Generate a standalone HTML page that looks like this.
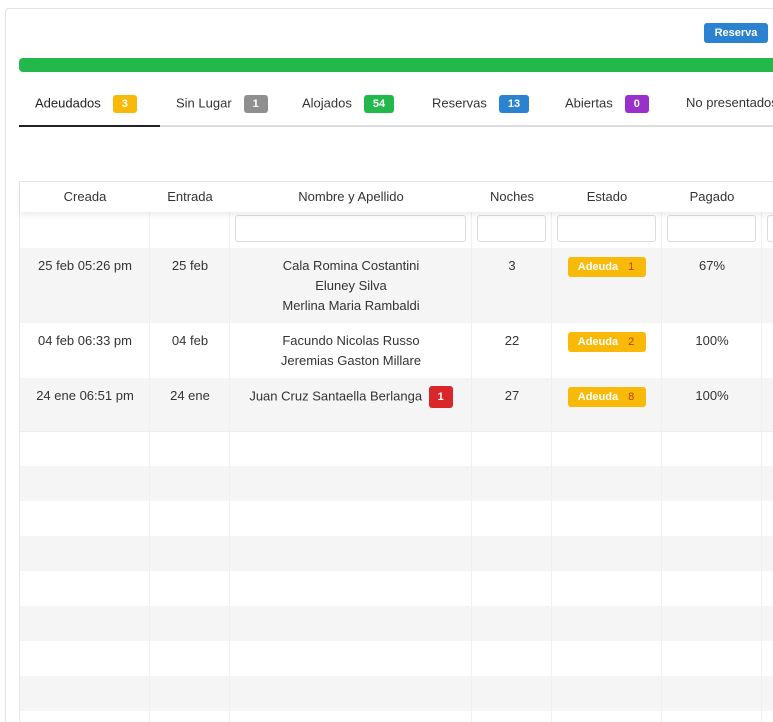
<!DOCTYPE html>
<html><head><style>
*{box-sizing:border-box;margin:0;padding:0}
html,body{width:773px;height:722px;overflow:hidden}
body{background:#fff;font-family:"Liberation Sans",sans-serif;color:#333;position:relative;font-size:13px}
.card{position:absolute;left:5px;top:8px;width:800px;height:730px;border:1px solid #e2e2e2;border-radius:4px}
.abs{position:absolute}
.btn{left:704px;top:23px;width:64px;height:20px;background:#2a82d1;color:#fff;font-size:11px;font-weight:bold;text-align:center;line-height:20px;border-radius:3px}
.bar{left:19px;top:58px;width:800px;height:14px;background:#22b84a;border-radius:4px}
.tab{position:absolute;top:95px;font-size:13px;color:#333;white-space:nowrap}
.b{display:inline-block;color:#fff;font-size:11px;font-weight:bold;padding:0 9px;height:18px;line-height:18px;border-radius:3px;margin-left:12px;vertical-align:middle}
.tabline{left:19px;top:125px;width:760px;height:2px;background:#ddd}
.tabact{left:19px;top:125px;width:141px;height:2px;background:#222}
.tbl{left:19px;top:181px;width:760px;height:560px;border-top:1px solid #e6e6e6;border-left:1px solid #e6e6e6}
.row{position:absolute;left:0;width:760px}
.g{background:#f5f5f5}
.vl{position:absolute;top:0;bottom:0;width:1px;background:#f0f0f0}
.c{position:absolute;text-align:center;line-height:20px;font-size:13px}
.inp{position:absolute;top:33px;height:27px;background:#fff;border:1px solid #dcdcdc;border-radius:3px}
.est{display:inline-block;background:#f9b908;color:#fff;font-size:11px;font-weight:bold;height:20px;line-height:20px;padding:0 12px 0 10px;border-radius:3px}
.est span{color:#b3420a;font-weight:normal;margin-left:10px}
</style></head><body>
<div class="card"></div>
<div class="abs btn">Reserva</div>
<div class="abs bar"></div>
<div class="tab" style="left:35px;color:#222">Adeudados<span class="b" style="background:#f9b908">3</span></div>
<div class="tab" style="left:176px">Sin Lugar<span class="b" style="background:#8f8f8f">1</span></div>
<div class="tab" style="left:302px">Alojados<span class="b" style="background:#22b84a">54</span></div>
<div class="tab" style="left:432px">Reservas<span class="b" style="background:#2a82d1">13</span></div>
<div class="tab" style="left:565px">Abiertas<span class="b" style="background:#9b2fc9">0</span></div>
<div class="tab" style="left:686px">No presentados</div>
<div class="abs tabline"></div><div class="abs tabact"></div>
<div class="abs tbl">
<div class="row" style="top:0;height:30px;background:#fff;box-shadow:0 3px 6px rgba(0,0,0,.08);z-index:2"></div>
<div class="row" style="top:30px;height:36px;background:#fff"></div>
<div class="row g" style="top:66px;height:75px"></div>
<div class="row" style="top:141px;height:55px"></div>
<div class="row g" style="top:196px;height:53px"></div>
<div class="row" style="top:249px;height:35px"></div>
<div class="row g" style="top:284px;height:35px"></div>
<div class="row" style="top:319px;height:35px"></div>
<div class="row g" style="top:354px;height:35px"></div>
<div class="row" style="top:389px;height:35px"></div>
<div class="row g" style="top:424px;height:35px"></div>
<div class="row" style="top:459px;height:35px"></div>
<div class="row g" style="top:494px;height:35px"></div>
<div class="row" style="top:529px;height:35px"></div>
<div class="row" style="top:249px;height:1px;background:#eee"></div>
<div class="vl" style="left:129px"></div><div class="vl" style="left:209px"></div><div class="vl" style="left:451px"></div><div class="vl" style="left:531px"></div><div class="vl" style="left:641px"></div><div class="vl" style="left:741px"></div>
<div style="position:absolute;left:0;top:0;width:760px;z-index:3">
<div class="c" style="left:0;width:130px;top:5px">Creada</div>
<div class="c" style="left:130px;width:80px;top:5px">Entrada</div>
<div class="c" style="left:210px;width:242px;top:5px">Nombre y Apellido</div>
<div class="c" style="left:452px;width:80px;top:5px">Noches</div>
<div class="c" style="left:532px;width:110px;top:5px">Estado</div>
<div class="c" style="left:642px;width:100px;top:5px">Pagado</div>
</div>
<div class="inp" style="left:215px;width:231px"></div>
<div class="inp" style="left:457px;width:69px"></div>
<div class="inp" style="left:537px;width:99px"></div>
<div class="inp" style="left:647px;width:89px"></div>
<div class="inp" style="left:747px;width:30px"></div>
<div class="c" style="left:0;width:130px;top:74px">25 feb 05:26 pm</div>
<div class="c" style="left:130px;width:80px;top:74px">25 feb</div>
<div class="c" style="left:210px;width:242px;top:74px">Cala Romina Costantini<br>Eluney Silva<br>Merlina Maria Rambaldi</div>
<div class="c" style="left:452px;width:80px;top:74px">3</div>
<div class="c" style="left:532px;width:110px;top:74px"><span class="est">Adeuda<span>1</span></span></div>
<div class="c" style="left:642px;width:100px;top:74px">67%</div>
<div class="c" style="left:0;width:130px;top:149px">04 feb 06:33 pm</div>
<div class="c" style="left:130px;width:80px;top:149px">04 feb</div>
<div class="c" style="left:210px;width:242px;top:149px">Facundo Nicolas Russo<br>Jeremias Gaston Millare</div>
<div class="c" style="left:452px;width:80px;top:149px">22</div>
<div class="c" style="left:532px;width:110px;top:149px"><span class="est">Adeuda<span>2</span></span></div>
<div class="c" style="left:642px;width:100px;top:149px">100%</div>
<div class="c" style="left:0;width:130px;top:204px">24 ene 06:51 pm</div>
<div class="c" style="left:130px;width:80px;top:204px">24 ene</div>
<div class="c" style="left:210px;width:242px;top:204px">Juan Cruz Santaella Berlanga <span style="display:inline-block;background:#d9262b;color:#fff;font-size:11px;font-weight:bold;width:24px;height:22px;line-height:22px;border-radius:3px;margin-left:3px;vertical-align:middle">1</span></div>
<div class="c" style="left:452px;width:80px;top:204px">27</div>
<div class="c" style="left:532px;width:110px;top:204px"><span class="est">Adeuda<span>8</span></span></div>
<div class="c" style="left:642px;width:100px;top:204px">100%</div>
</div>
</body></html>
